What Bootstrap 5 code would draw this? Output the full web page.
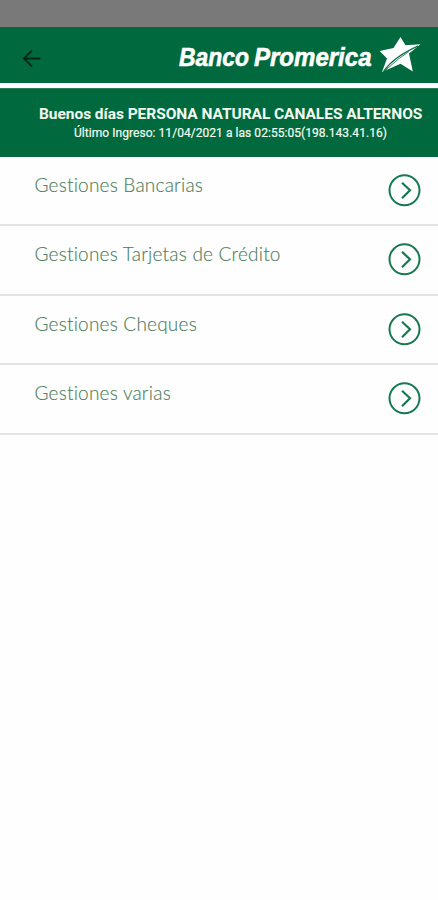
<!DOCTYPE html>
<html lang="es">
<head>
<meta charset="utf-8">
<meta name="viewport" content="width=device-width, initial-scale=1">
<title>Banco Promerica</title>
<link href="https://cdn.jsdelivr.net/npm/bootstrap@5.3.0/dist/css/bootstrap.min.css" rel="stylesheet">
<style>
body{font-family:Roboto,sans-serif;background:#fefefe}
.status-strip{height:27px;background:#797979}
.brand-bar{height:56px;background:#006a3e;padding:0 17px 0 22px}
.logo-text{font:italic 700 26px "Liberation Sans",sans-serif;stroke:#fff;stroke-width:.6}
.greeting{height:69px;margin-top:5px;background:#006a3e;color:#f4faf0;padding:16px 16px 0 39px;border-top:1px solid #2c8058}
.greet-name{font-size:15.5px;line-height:18px;font-weight:700;letter-spacing:-.05px}
.greet-last{font-size:12px;line-height:16px;padding-top:2px;letter-spacing:.05px;-webkit-text-stroke:.2px}
.menu-row.list-group-item{height:69.4px;padding:0 16px 0 34.5px;background:#fefefe;border:0 solid #e4e4e5;border-bottom-width:2px;color:#4f7f5c;font:300 19px/24px Lato,sans-serif;letter-spacing:.21px;font-variant-ligatures:none}
.menu-label{padding-top:16px;-webkit-text-stroke:.15px}
.menu-row svg{margin-top:16px}
</style>
</head>
<body>
<div class="status-strip"></div>
<header>
  <nav class="brand-bar d-flex align-items-center justify-content-between">
    <a href="#" aria-label="Volver" class="d-flex mt-2"><svg width="20" height="20" viewBox="0 0 20 20" fill="none" stroke="#052817" stroke-width="1.900"><path d="M18.3 9.500H2.500M10 1.500L2 9.500l8 8"/></svg></a>
    <svg width="244" height="46" viewBox="0 0 244 46" role="img" aria-label="Banco Promerica">
      <g fill="#fff">
        <text class="logo-text" x="2" y="33.700" textLength="70" lengthAdjust="spacingAndGlyphs">Banco</text>
        <text class="logo-text" x="77" y="33.700" textLength="117.500" lengthAdjust="spacingAndGlyphs">Promerica</text>
        <path d="M223.500 5L228.500 13.300L243.500 12.200L232 21.500L235.800 39.500L223.500 31.800L205 40L210 26.500L202.700 19L216.500 16Z"/>
      </g>
      <path d="M206.500 39.500Q217 24.500 241 14" fill="none" stroke="#006a3e" stroke-width="1.300"/>
      <path d="M207 39.700Q216 31.500 222 26.500L232 19.500" fill="none" stroke="#006a3e" stroke-width=".8"/>
    </svg>
  </nav>
  <section class="greeting text-center text-nowrap">
    <div class="greet-name">Buenos días PERSONA NATURAL CANALES ALTERNOS</div>
    <div class="greet-last">Último Ingreso: 11/04/2021 a las 02:55:05(198.143.41.16)</div>
  </section>
</header>
<svg class="d-none"><symbol id="go" viewBox="0 0 34 34"><g fill="none" stroke="#15784f"><circle cx="16.500" cy="17.300" r="15" stroke-width="2"/><path d="M14 9.800L22 17.300l-8 8" stroke-width="2.200"/></g></symbol></svg>
<main class="list-group rounded-0">
  <a href="#" class="menu-row list-group-item d-flex align-items-start justify-content-between"><span class="menu-label">Gestiones Bancarias</span><svg width="34" height="34"><use href="#go"/></svg></a>
  <a href="#" class="menu-row list-group-item d-flex align-items-start justify-content-between"><span class="menu-label">Gestiones Tarjetas de Crédito</span><svg width="34" height="34"><use href="#go"/></svg></a>
  <a href="#" class="menu-row list-group-item d-flex align-items-start justify-content-between"><span class="menu-label">Gestiones Cheques</span><svg width="34" height="34"><use href="#go"/></svg></a>
  <a href="#" class="menu-row list-group-item d-flex align-items-start justify-content-between"><span class="menu-label">Gestiones varias</span><svg width="34" height="34"><use href="#go"/></svg></a>
</main>
<script src="https://cdn.jsdelivr.net/npm/bootstrap@5.3.0/dist/js/bootstrap.bundle.min.js"></script>
</body>
</html>
